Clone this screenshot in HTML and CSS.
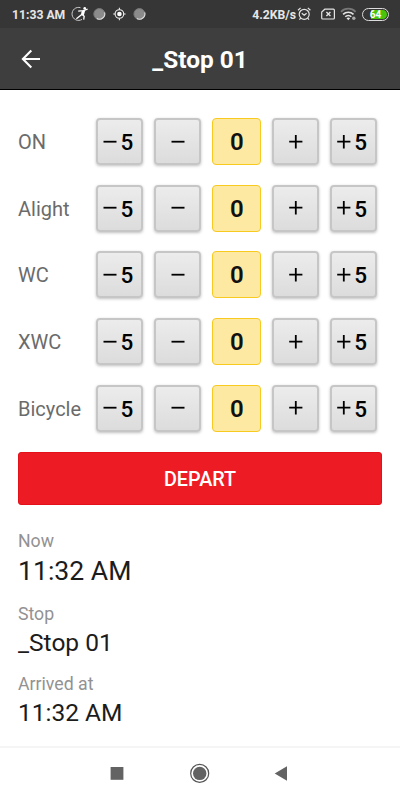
FILE: index.html
```html
<!DOCTYPE html>
<html lang="en">
<head>
    <meta charset="UTF-8">
    <meta name="viewport" content="width=device-width, initial-scale=1.0">
    <title>_Stop 01</title>
    <link rel="stylesheet" href="styles.css">
</head>
<body>
    <div class="status-bar">
        <span class="clock">11:33 AM</span>
        <svg class="status-left" width="78" height="20" viewBox="0 0 78 20">
            <path d="M10.5 3.7A6.5 6.5 0 1 0 12 15.4" fill="none" stroke="#ccc" stroke-width="1"/>
            <path d="M8.2 7.2l4.8-.6 4.6-1.4M11.8 10.4l-5.4 4.4M12.2 10.4l2 1.8-.5 3.4" fill="none" stroke="#fff" stroke-width="1.3"/>
            <path d="M11.8 6.7l3.6-.7-1.7 5.4-2.9-.4z" fill="#fff"/>
            <circle cx="14.7" cy="4.3" r="1.3" fill="#fff"/>
            <circle cx="29.3" cy="10" r="5.5" fill="#8b8b8b" stroke="#777"/>
            <path d="M34.6 8.3a5.5 5.5 0 0 1-7.8 6.3" fill="none" stroke="#ddd" stroke-width="1.1"/>
            <circle cx="49.4" cy="10" r="4.3" fill="none" stroke="#eee" stroke-width="1.1"/>
            <circle cx="49.4" cy="10" r="2.3" fill="#fff"/>
            <path d="M49.4 3.8v2M49.4 14.2v2M43.2 10h2M53.6 10h2" stroke="#eee" stroke-width="1.1"/>
            <circle cx="69.4" cy="10" r="5.5" fill="#8b8b8b" stroke="#777"/>
            <path d="M74.7 8.3a5.5 5.5 0 0 1-7.8 6.3" fill="none" stroke="#ddd" stroke-width="1.1"/>
        </svg>
        <span class="speed">4.2KB/s</span>
        <svg class="status-right" width="62" height="20" viewBox="0 0 62 20">
            <g fill="none" stroke="#e4e4e4" stroke-width="1.2">
                <circle cx="9.2" cy="10.3" r="5"/>
                <path d="M6.8 9.2l2.4 2 2.4-2M3 6.3l2.6-2.4M15.4 6.3l-2.6-2.4M5.7 14.2l-1.3 1.5M12.7 14.2l1.3 1.5"/>
                <path d="M29.8 5.2h8.6a1 1 0 0 1 1 1v7.8a1 1 0 0 1-1 1H27.7a1 1 0 0 1-1-1V8z"/>
                <path d="M31.4 8.1l4 4M35.4 8.1l-4 4" stroke-width="1.4"/>
                <path d="M46 7.8a10.2 10.2 0 0 1 14.6 0" stroke="#777" stroke-width="1.7"/>
                <path d="M48.1 10.4a7.3 7.3 0 0 1 10.4 0M50.3 12.8a4.2 4.2 0 0 1 6 0" stroke-width="1.6"/>
            </g>
            <path d="M51.5 14.3a2.7 2.7 0 0 1 3.6 0l-1.8 1.9z" fill="#e4e4e4"/>
            <circle cx="58.8" cy="14.2" r="1.7" fill="#aaa"/>
        </svg>
        <span class="battery"><span class="battery-level">64</span></span>
    </div>

    <header class="app-bar">
        <svg class="back" width="20" height="20" viewBox="0 0 20 20">
            <path d="M19 10H2.2M10.3 1.6L1.9 10l8.4 8.4" fill="none" stroke="#fff" stroke-width="2.1"/>
        </svg>
        <h1>_Stop 01</h1>
    </header>

    <main>
        <div class="counters" id="counters"></div>

        <button class="depart">DEPART</button>

        <dl class="details">
            <dt>Now</dt>
            <dd class="now">11:32 AM</dd>
            <dt>Stop</dt>
            <dd>_Stop 01</dd>
            <dt>Arrived at</dt>
            <dd>11:32 AM</dd>
        </dl>
    </main>

    <nav class="nav-bar">
        <svg width="184" height="24" viewBox="0 0 184 24" fill="#636363">
            <rect x="2.6" y="5" width="12.8" height="12.8"/>
            <circle cx="91.7" cy="11.4" r="9" fill="none" stroke="#555" stroke-width="1.2"/>
            <circle cx="91.7" cy="11.4" r="6.7"/>
            <path d="M179 4.2v14.6L166.7 11.5z"/>
        </svg>
    </nav>

    <script>
        const minus = '<svg class="sign" width="14" height="14" viewBox="0 0 14 14"><path d="M.5 6.7h13"/></svg>';
        const plus = '<svg class="sign" width="14" height="14" viewBox="0 0 14 14"><path d="M.2 6.7h13.2M6.8 0v13.4"/></svg>';

        // One row of step buttons for each passenger type
        document.getElementById('counters').innerHTML = ['ON', 'Alight', 'WC', 'XWC', 'Bicycle'].map(function(name) {
            return '<div class="counter">' +
                '<span class="name">' + name + '</span>' +
                '<button class="step">' + minus + '<span>5</span></button>' +
                '<button class="step">' + minus + '</button>' +
                '<output class="count">0</output>' +
                '<button class="step">' + plus + '</button>' +
                '<button class="step">' + plus + '<span>5</span></button>' +
                '</div>';
        }).join('');
    </script>
</body>
</html>
```
FILE: styles.css
```css
* {
    box-sizing: border-box;
}
body {
    margin: 0;
    height: 100vh;
    display: flex;
    flex-direction: column;
    overflow: hidden;
    font-family: Roboto, sans-serif;
    background: #fff;
    color: #1c1c1c;
}
button {
    font-family: inherit;
    padding: 0;
    cursor: pointer;
}
.status-bar {
    height: 28px;
    flex: none;
    display: flex;
    align-items: center;
    padding: 0 11px 0 12px;
    background: #363636;
    color: #e6e6e6;
    font-size: 12.2px;
    font-weight: 700;
    white-space: nowrap;
}
.clock {
    width: 54px;
    padding-top: 1px;
}
.status-left {
    margin-left: 4px;
}
.speed {
    margin-left: auto;
    padding-top: 1px;
    font-size: 12.2px;
}
.status-right {
    margin: 0 0 0 -1px;
}
.battery {
    width: 27px;
    height: 13px;
    margin-left: 5px;
    padding: 1px;
    border: 1.5px solid #dcdcdc;
    border-radius: 7px;
    display: flex;
}
.battery-level {
    flex: 1;
    border-radius: 5px;
    background: linear-gradient(90deg, #363636 32%, #48c50b 32%);
    color: #fff;
    font-size: 10px;
    line-height: 10px;
    text-align: center;
}
.app-bar {
    height: 62px;
    flex: none;
    display: flex;
    align-items: center;
    padding: 0 21px;
    background: #3e3e3e;
    border-bottom: 1px solid #000;
    color: #fff;
}
.app-bar h1 {
    flex: 1;
    margin: 2px 20px 0 0;
    font-size: 24.4px;
    line-height: 28px;
    font-weight: 700;
    text-align: center;
}
main {
    flex: 1;
    padding: 28px 18px 0;
}
.counters {
    display: grid;
    gap: 19.7px;
}
.counter {
    display: grid;
    grid-template-columns: 67.5px 47px 47px 49px 47px 47px;
    column-gap: 10.95px;
    height: 47px;
    align-items: center;
}
.name {
    font-size: 20px;
    line-height: 24px;
    color: #6b6b6b;
    padding-top: 1px;
}
.step {
    height: 47px;
    display: flex;
    align-items: center;
    justify-content: center;
    gap: 3px;
    border: 2px solid #c6c6c6;
    border-radius: 4px;
    background: linear-gradient(#ececec, #dcdcdc);
    box-shadow: 0 1px 3px rgba(0, 0, 0, 0.25);
    color: #000;
    font-size: 22.5px;
    font-weight: 500;
}
.step span {
    width: 13px;
    margin-right: 3px;
    padding-top: 1px;
}
.sign {
    stroke: #000;
    stroke-width: 1.8;
}
.count {
    height: 47px;
    border: 1px solid #f8ca1f;
    border-radius: 4px;
    background: #fee9a2;
    color: #111;
    font-size: 24px;
    font-weight: 600;
    line-height: 47px;
    text-align: center;
}
.depart {
    display: block;
    width: 100%;
    height: 53px;
    margin-top: 20.6px;
    padding-top: 2px;
    border: 1px solid #e2111a;
    border-radius: 3px;
    background: #ed1c24;
    color: #fff;
    font-size: 19.8px;
    font-weight: 500;
}
.details {
    margin: 26px 0 0;
}
.details dt {
    font-size: 17.7px;
    line-height: 20px;
    color: #929292;
}
.details dd {
    margin: 4px 0 16px;
    font-size: 24.5px;
    line-height: 30px;
}
.details .now {
    margin-bottom: 17px;
    font-size: 26.6px;
    line-height: 32px;
}
.nav-bar {
    height: 54px;
    flex: none;
    display: flex;
    align-items: center;
    justify-content: center;
    border-top: 2px solid #f5f5f5;
}
```
